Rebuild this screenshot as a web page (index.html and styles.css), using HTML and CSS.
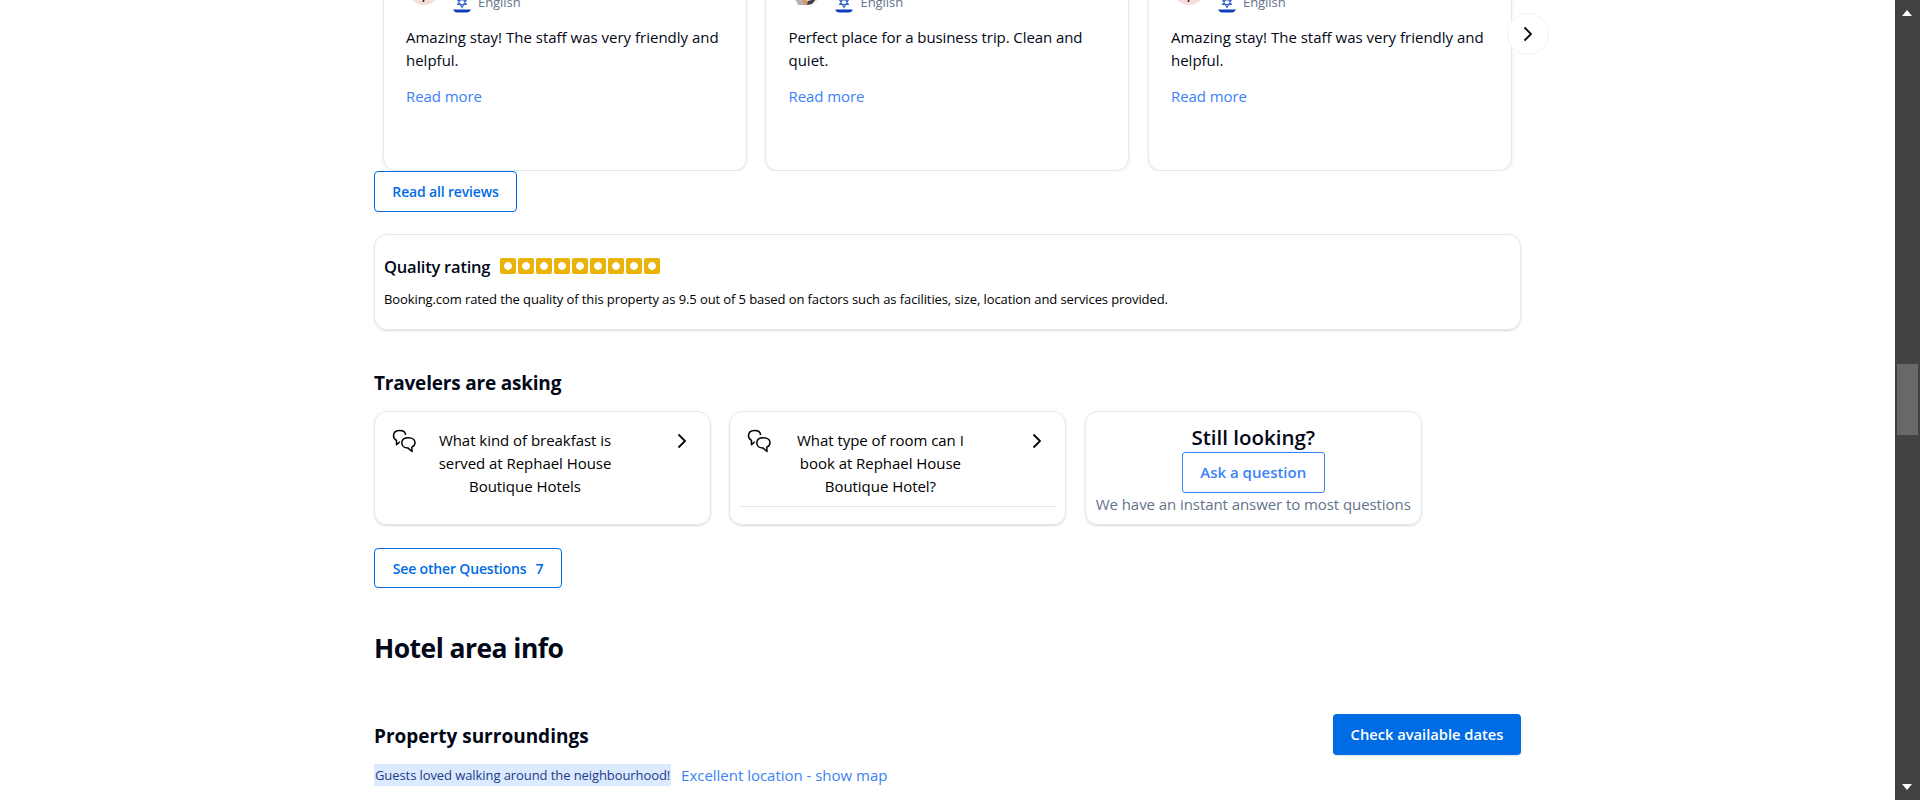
FILE: index.html
```html
<!DOCTYPE html>
<html lang="en">
<head>
<meta charset="utf-8">
<title>Rephael House Boutique Hotel</title>
<link rel="stylesheet" href="styles.css">
</head>
<body>
<div class="window">
<main class="page">
  <section class="carousel">
    <div class="reviews">
      <article class="review">
        <div class="guest"><span class="avatar"><svg width="32" height="32" viewBox="0 0 32 32"><circle cx="16" cy="16" r="16" fill="#f6ded8"/><path d="M15.500 26v3" stroke="#3a2024" stroke-width="1.600"/></svg></span><svg class="flag" width="18" height="18" viewBox="0 0 18 18"><circle cx="9" cy="7" r="9" fill="#fff"/><path d="M9 2l4.300 7.500H4.700zM9 12.500L4.700 5h8.600z" fill="none" stroke="#3a66cc" stroke-width="1.200"/><path d="M0 14.500h18q-1.500 3-4 3H4q-2.500 0-4-3z" fill="#0f3fb8"/></svg><span class="lang">English</span></div>
        <p class="body-text"><span class="t">Amazing stay! The staff was very friendly and</span><br>helpful.</p>
        <a class="link">Read more</a>
      </article>
      <article class="review">
        <div class="guest"><span class="avatar"><svg width="32" height="32" viewBox="0 0 32 32"><circle cx="16" cy="16" r="16" fill="#f0d8cc"/><path d="M6 27l6-1 2 6H8z" fill="#b9b2b5"/><path d="M12 26l6 2 0 4h-5z" fill="#d9976c"/><path d="M18 28l8-2-4 5-5 1z" fill="#3b3a4c"/></svg></span><svg class="flag" width="18" height="18" viewBox="0 0 18 18"><circle cx="9" cy="7" r="9" fill="#fff"/><path d="M9 2l4.300 7.500H4.700zM9 12.500L4.700 5h8.600z" fill="none" stroke="#3a66cc" stroke-width="1.200"/><path d="M0 14.500h18q-1.500 3-4 3H4q-2.500 0-4-3z" fill="#0f3fb8"/></svg><span class="lang">English</span></div>
        <p class="body-text"><span class="t t-perfect">Perfect place for a business trip. Clean and</span><br>quiet.</p>
        <a class="link">Read more</a>
      </article>
      <article class="review">
        <div class="guest"><span class="avatar"><svg width="32" height="32" viewBox="0 0 32 32"><circle cx="16" cy="16" r="16" fill="#f6ded8"/><path d="M15.500 26v3" stroke="#3a2024" stroke-width="1.600"/></svg></span><svg class="flag" width="18" height="18" viewBox="0 0 18 18"><circle cx="9" cy="7" r="9" fill="#fff"/><path d="M9 2l4.300 7.500H4.700zM9 12.500L4.700 5h8.600z" fill="none" stroke="#3a66cc" stroke-width="1.200"/><path d="M0 14.500h18q-1.500 3-4 3H4q-2.500 0-4-3z" fill="#0f3fb8"/></svg><span class="lang">English</span></div>
        <p class="body-text"><span class="t">Amazing stay! The staff was very friendly and</span><br>helpful.</p>
        <a class="link">Read more</a>
      </article>
    </div>
    <button class="next" aria-label="Next"><svg width="18" height="18" viewBox="0 0 18 18"><path d="M5.500 2.500L12 9l-6.500 6.500" fill="none" stroke="#000" stroke-width="1.800"/></svg></button>
  </section>
  <button class="btn outline read-all">Read all reviews</button>

  <section class="quality">
    <div class="quality-head"><h3>Quality rating</h3><div class="marks"><i></i><i></i><i></i><i></i><i></i><i></i><i></i><i></i><i></i></div></div>
    <p>Booking.com rated the quality of this property as 9.5 out of 5 based on factors such as facilities, size, location and services provided.</p>
  </section>

  <h2 class="asking-title">Travelers are asking</h2>
  <section class="questions">
    <article class="question">
      <svg class="chat" width="24" height="24" viewBox="0 0 24 24"><path d="M13.500 6C13.500 2.500 10.700 1.500 7.500 1.500 3.800 1.500 1.500 3.500 1.500 6.800c0 2.300 1 3.600 3 4.700v4.200l3.300-3M16.500 8.700c-4 0-6.700 2-6.700 5.200s2.700 5 6 5l4.200 3.600-.2-4.400c2-.9 3.200-2.300 3.200-4.400 0-3-2.700-5-6.500-5z" fill="none" stroke="#000" stroke-width="1.500" stroke-linejoin="round"/></svg>
      <p class="ask">What kind of breakfast is<br>served at Rephael House<br>Boutique Hotels</p>
      <svg class="chev" width="18" height="18" viewBox="0 0 18 18"><path d="M5.500 2.500L12 9l-6.500 6.500" fill="none" stroke="#000" stroke-width="1.800"/></svg>
    </article>
    <article class="question lined">
      <svg class="chat" width="24" height="24" viewBox="0 0 24 24"><path d="M13.500 6C13.500 2.500 10.700 1.500 7.500 1.500 3.800 1.500 1.500 3.500 1.500 6.800c0 2.300 1 3.600 3 4.700v4.200l3.300-3M16.500 8.700c-4 0-6.700 2-6.700 5.200s2.700 5 6 5l4.200 3.600-.2-4.400c2-.9 3.200-2.300 3.200-4.400 0-3-2.700-5-6.500-5z" fill="none" stroke="#000" stroke-width="1.500" stroke-linejoin="round"/></svg>
      <p class="ask">What type of room can I<br>book at Rephael House<br>Boutique Hotel?</p>
      <svg class="chev" width="18" height="18" viewBox="0 0 18 18"><path d="M5.500 2.500L12 9l-6.500 6.500" fill="none" stroke="#000" stroke-width="1.800"/></svg>
    </article>
    <article class="question still">
      <h3>Still looking?</h3>
      <button class="btn ask-btn">Ask a question</button>
      <p>We have an instant answer to most questions</p>
    </article>
  </section>
  <button class="btn outline see-other"><span>See other Questions</span><span>7</span></button>

  <h1>Hotel area info</h1>
  <section class="surroundings">
    <div>
      <h2>Property surroundings</h2>
      <div class="notes"><mark>Guests loved walking around the neighbourhood!</mark><a class="link">Excellent location - show map</a></div>
    </div>
    <button class="btn solid">Check available dates</button>
  </section>
</main>
<aside class="scrollbar"><span class="up"></span><span class="thumb"></span><span class="down"></span></aside>
</div>
</body>
</html>
```

FILE: styles.css
```css
* { box-sizing: border-box; }
body, h1, h2, h3, p { margin: 0; }
body { background: #fff; color: #020817; font: 15px/23px "Open Sans", "Noto Sans", sans-serif; }
button { font: inherit; cursor: pointer; padding: 0; }
.t, mark, .link, .btn, .still p, .ask { white-space: nowrap; }
.window { display: flex; justify-content: space-between; height: 800px; overflow: hidden; }
.page { width: 1147px; margin-left: 374px; }

.carousel { position: relative; }
.reviews { display: grid; grid-template-columns: repeat(3, 363.800px); gap: 18.700px; height: 171px; padding-left: 9px; overflow: hidden; }
.review { height: 211px; margin-top: -40px; padding: 19px 22px; border: 1px solid #e2e8f0; border-radius: 13px; box-shadow: 0 1px 3px #0000001a; }
.guest { display: flex; align-items: flex-end; height: 32px; padding-left: 2px; }
.avatar { height: 32px; margin: 0 13px 7px 0; }
.avatar svg, .flag { display: block; }
.flag { flex: none; margin-bottom: -1px; }
.lang { margin-left: 7px; color: #64748b; font-size: 13px; line-height: 19px; letter-spacing: -0.050px; }
.body-text { margin-top: 14px; }
.t-perfect { letter-spacing: -0.090px; }
.link { color: #3b82f6; }
.review .link { display: inline-block; margin-top: 13px; letter-spacing: -0.080px; }
.next { position: absolute; left: 1133px; top: 13px; width: 42px; height: 42px; display: grid; place-items: center; background: #fff; border: 1px solid #f1f2f4; border-radius: 50%; }

.btn { display: flex; align-items: center; justify-content: center; border-radius: 4px; font-weight: 600; font-size: 14px; }
.outline { border: 1px solid #006ce4; background: #fff; color: #006ce4; letter-spacing: -0.160px; }
.read-all { width: 143px; height: 41px; }

.quality { height: 96px; margin-top: 22px; padding: 19px 9px; border: 1px solid #e2e8f0; border-radius: 13px; box-shadow: 0 1px 2px #00000026; }
.quality-head { display: flex; align-items: center; height: 24px; gap: 10px; }
.quality h3 { font-size: 16.500px; font-weight: 600; letter-spacing: -0.220px; }
.marks { display: flex; gap: 2px; }
.marks i { width: 16px; height: 16px; border-radius: 2px; background: radial-gradient(circle, #fff 3.500px, #eab308 4.200px); }
.quality p { margin-top: 10px; font-size: 13px; color: #000; letter-spacing: -0.095px; }

h2 { font-size: 19px; line-height: 26px; font-weight: 700; }
.asking-title { margin-top: 40px; letter-spacing: -0.200px; }
.questions { display: grid; grid-template-columns: repeat(3, 337px); gap: 18.400px; margin-top: 15px; }
.question { position: relative; height: 114px; display: flex; justify-content: space-between; padding: 17px 19px 0 17px; border: 1px solid #e2e8f0; border-radius: 13px; box-shadow: 0 1px 2px #00000026; }
.ask { margin-right: 39px; text-align: center; line-height: 22.750px; color: #000; letter-spacing: -0.040px; }
.chev { margin-top: 3px; }
.lined::after { content: ""; position: absolute; left: 9px; right: 9px; bottom: 17px; border-top: 1px solid #e2e8f0; }
.still { flex-direction: column; align-items: center; justify-content: flex-start; padding: 10px 0 0; }
.still h3 { font-size: 20.500px; line-height: 30px; font-weight: 600; }
.ask-btn { width: 143px; height: 41px; border: 1px solid #3b82f6; border-radius: 3px; background: #fff; color: #3b82f6; font-size: 15px; }
.still p { color: #64748b; letter-spacing: -0.070px; }
.see-other { width: 188px; height: 40px; margin-top: 23px; gap: 9px; }

h1 { margin-top: 42px; font-size: 26.500px; line-height: 36px; font-weight: 700; letter-spacing: -0.550px; }
.surroundings { display: flex; justify-content: space-between; margin-top: 48px; }
.surroundings h2 { margin-top: 9px; }
.notes { display: flex; align-items: center; gap: 10px; margin-top: 15px; }
mark { height: 22px; padding: 0 1px; background: #dbeafe; color: #1e3a8a; font-size: 13px; line-height: 22px; letter-spacing: -0.085px; }
.notes .link { line-height: 22px; letter-spacing: -0.020px; }
.solid { width: 188px; height: 41px; border: 0; background: #006ce4; color: #fff; font-size: 14.700px; box-shadow: 0 1px 2px #00000020; }

.scrollbar { position: relative; width: 25px; background: #424242; }
.scrollbar span { position: absolute; }
.scrollbar .thumb { left: 2px; top: 364px; width: 21px; height: 71px; background: #686868; }
.scrollbar .up { left: 7px; top: 10px; border: 5.500px solid transparent; border-top: 0; border-bottom: 6px solid #fff; }
.scrollbar .down { left: 7px; bottom: 10px; border: 5.500px solid transparent; border-bottom: 0; border-top: 6px solid #fff; }
```
